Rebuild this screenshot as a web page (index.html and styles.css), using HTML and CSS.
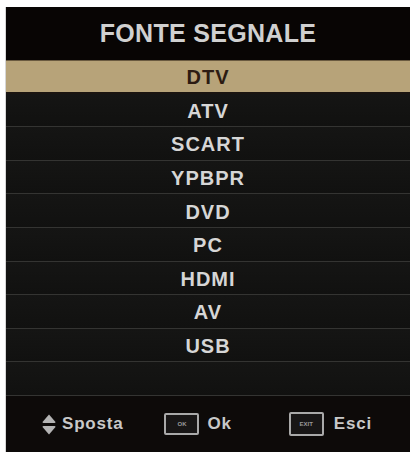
FILE: index.html
```html
<!DOCTYPE html>
<html>
<head>
<meta charset="utf-8">
<link rel="stylesheet" href="styles.css">
</head>
<body>
<div class="panel">
  <div class="title">FONTE SEGNALE</div>
  <ul class="list">
    <li class="row active">DTV</li>
    <li class="row">ATV</li>
    <li class="row">SCART</li>
    <li class="row">YPBPR</li>
    <li class="row">DVD</li>
    <li class="row">PC</li>
    <li class="row">HDMI</li>
    <li class="row">AV</li>
    <li class="row">USB</li>
    <li class="row"></li>
  </ul>
  <div class="footer">
    <div class="hint hint-move">
      <svg class="arrows" width="14" height="21" viewBox="0 0 14 21">
        <path d="M7 0.5 L13.5 8 Q13.5 9 12.5 9 L1.5 9 Q0.5 9 0.5 8 Z" fill="#b4b4b4"/>
        <path d="M7 20.5 L13.5 13 Q13.5 12 12.5 12 L1.5 12 Q0.5 12 0.5 13 Z" fill="#b4b4b4"/>
      </svg>
      <span class="label">Sposta</span>
    </div>
    <div class="hint hint-ok">
      <span class="key">OK</span>
      <span class="label">Ok</span>
    </div>
    <div class="hint hint-exit">
      <span class="key key-exit">EXIT</span>
      <span class="label">Esci</span>
    </div>
  </div>
</div>
</body>
</html>
```
FILE: styles.css
```css
html, body {
  margin: 0;
  padding: 0;
  background: #ffffff;
}
body {
  width: 412px;
  height: 454px;
  font-family: "Liberation Sans", Arial, sans-serif;
}
.panel {
  margin: 7px 2px 0 6px;
  width: 404px;
  height: 445px;
  background: #0c0908;
  display: flex;
  flex-direction: column;
  box-shadow: -1px 0 0 #d6d6d6;
}
.title {
  height: 53px;
  display: flex;
  align-items: center;
  justify-content: center;
  color: #d0d0d0;
  font-weight: bold;
  font-size: 25px;
  letter-spacing: 0.3px;
  background: #080504;
}
.list {
  list-style: none;
  margin: 0;
  padding: 0;
  height: 336px;
  display: grid;
  grid-template-rows: repeat(10, 1fr);
}
.row {
  display: flex;
  align-items: center;
  justify-content: center;
  padding-top: 3px;
  box-sizing: border-box;
  color: #d6d6d6;
  font-weight: bold;
  font-size: 20px;
  letter-spacing: 1px;
  background: linear-gradient(#151514, #111110);
  border-bottom: 1px solid #343432;
}
.row.active {
  background: #b7a379;
  color: #2c1b12;
  border-top: 1px solid #6a5a40;
  border-bottom: 2px solid #1a1410;
}
.footer {
  flex: 1;
  display: flex;
  align-items: center;
  padding-left: 36px;
  background: #0d0a09;
}
.hint {
  display: flex;
  align-items: center;
}
.hint-move {
  gap: 6px;
}
.hint-ok {
  margin-left: 41px;
  gap: 8px;
}
.hint-exit {
  margin-left: 57px;
  gap: 10px;
}
.label {
  color: #c8c8c8;
  font-weight: bold;
  font-size: 17px;
  letter-spacing: 0.8px;
}
.key {
  width: 35px;
  height: 22px;
  box-sizing: border-box;
  border: 2.5px solid #a9a9a9;
  border-radius: 2px;
  display: flex;
  align-items: center;
  justify-content: center;
  color: #9a9a9a;
  font-size: 6px;
  font-weight: bold;
  background: #181616;
}
.key-exit {
  height: 24px;
}
```
